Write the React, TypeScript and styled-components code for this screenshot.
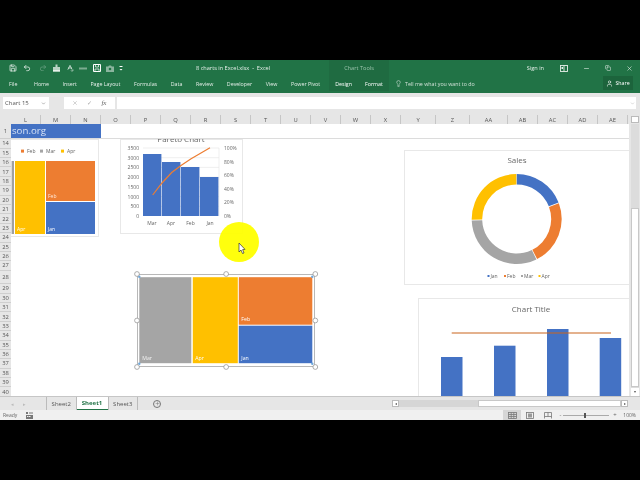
import React from "react";
import styled, { createGlobalStyle } from "styled-components";
import { Save, Undo2, Redo2, SpellCheck, Lightbulb, User, Minus, X, Copy, ChevronDown, Plus } from "lucide-react";

const Global = createGlobalStyle`
  html, body { margin: 0; padding: 0; background: #000; }
  body { font-family: "Open Sans", "Liberation Sans", sans-serif; }
`;

const BLUE = "#4472C4", ORANGE = "#ED7D31", GRAY = "#A5A5A5", YELLOW = "#FFC000";

const Page = styled.div`
  width: 640px; height: 480px; background: #000; overflow: hidden;
  display: flex; flex-direction: column; filter: blur(0.35px);
`;
const Band = styled.div<{ $h: number }>`height: ${p => p.$h}px; flex: none; background: #000;`;

const TitleRow = styled.div`
  height: 16px; flex: none; background: #217346; color: #fff; display: flex; align-items: stretch; font-size: 5.6px;
`;
const Qat = styled.div`
  width: 196px; flex: none; display: flex; align-items: center; padding-left: 9px; box-sizing: border-box;
`;
const QatIcon = styled.span<{ $faded?: boolean; $w: number }>`
  display: flex; width: ${p => p.$w}px; flex: none; justify-content: flex-start; opacity: ${p => p.$faded ? 0.35 : 1};
`;
const DocTitle = styled.div`width: 133px; flex: none; display: flex; align-items: center; white-space: pre; color: #e6efe9;`;
const ContextCell = styled.div`
  width: 60px; flex: none; background: #1F6B41; color: #9cc4ad; display: flex; align-items: center; justify-content: center;
`;
const WindowControls = styled.div`
  flex: 1; display: flex; align-items: center; justify-content: flex-end; padding-right: 7px; gap: 15px; color: #e6efe9;
`;
const SignIn = styled.span`margin-right: 1px;`;

const TabsRow = styled.div`
  height: 17px; flex: none; background: #217346; color: #e4eee8; display: flex; align-items: flex-start; font-size: 5.3px;
`;
const TabsLeft = styled.div`
  width: 329px; height: 15px; flex: none; display: flex; align-items: center; gap: 13.6px; padding-left: 9px; box-sizing: border-box; white-space: nowrap;
  & > span:nth-child(2) { margin-left: 3px; }
`;
const ContextTabs = styled.div`
  width: 60px; flex: none; height: 15px; background: #1F6B41; color: #fff; display: flex; align-items: center; justify-content: center; gap: 13px;
`;
const TellMe = styled.div`
  flex: 1; height: 15px; display: flex; align-items: center; gap: 3px; padding-left: 6px; color: #cfe0d6; white-space: nowrap;
`;
const ShareButton = styled.div`
  width: 30px; height: 14px; margin: 0 7px 0 0; background: #1c643c; color: #fff; display: flex; align-items: center; justify-content: center; gap: 2px; flex: none;
`;

const FormulaBar = styled.div`
  height: 22px; flex: none; background: #e6e6e6; display: flex; align-items: center; font-size: 6px; color: #555; box-sizing: border-box; padding: 0 3px 2px;
`;
const NameBox = styled.div`
  width: 46px; height: 12px; background: #fff; display: flex; align-items: center; justify-content: space-between; padding: 0 3px 0 2px; box-sizing: border-box;
`;
const FxBox = styled.div`
  width: 51px; height: 12px; margin-left: 15px; background: #fff; display: flex; align-items: center; justify-content: space-around; color: #a8a8a8; padding: 0 4px; box-sizing: border-box;
`;
const Fx = styled.i`color: #666; font-family: "Liberation Serif", serif; font-size: 7px;`;
const FormulaInput = styled.div`
  flex: 1; height: 12px; margin: 0 1px 0 2px; background: #fff; display: flex; align-items: center; justify-content: flex-end; padding-right: 1px; color: #aaa;
`;

const HeaderRow = styled.div`
  height: 9px; flex: none; background: #e6e6e6; display: flex; font-size: 5.8px; color: #555;
`;
const Corner = styled.div`width: 11px; flex: none;`;
const ColHead = styled.div<{ $w: number }>`
  width: ${p => p.$w}px; flex: none; box-sizing: border-box; border-right: 1px solid #c6c6c6; display: flex; align-items: center; justify-content: center;
`;

const SheetArea = styled.div`height: 272px; flex: none; display: flex; background: #fff;`;
const RowHeads = styled.div`
  width: 11px; flex: none; background: #e6e6e6; display: flex; flex-direction: column; font-size: 5.8px; color: #555; overflow: hidden;
`;
const RowHead = styled.div<{ $h: number }>`
  height: ${p => p.$h}px; flex: none; box-sizing: border-box; border-bottom: 1px solid #cfcfcf; display: flex; align-items: center; justify-content: center;
`;
const Canvas = styled.div`width: 618px; flex: none; position: relative; overflow: hidden; background: #fff;`;
const Banner = styled.div`
  position: absolute; left: 0; top: 0; width: 90px; height: 14px; background: ${BLUE}; color: #d7e2f5; font-size: 9.7px; line-height: 14px; padding-left: 1px; box-sizing: border-box; white-space: nowrap; z-index: 3;
`;
const BannerRule = styled.div`
  position: absolute; left: 0; top: 14px; width: 618px; height: 1px; background: #dcdcdc; z-index: 3;
`;
const BannerCover = styled.div`
  position: absolute; left: 0; top: 0; width: 618px; height: 14px; background: #fff; z-index: 2;
`;

const ChartFrame = styled.div<{ $x: number; $y: number; $w: number; $h: number; $line?: string }>`
  position: absolute; left: ${p => p.$x}px; top: ${p => p.$y}px; width: ${p => p.$w}px; height: ${p => p.$h}px;
  box-sizing: border-box; background: #fff; border: 1px solid ${p => p.$line || "#e8e8e8"};
`;
const DrawSvg = styled.svg`position: absolute; left: 0; top: 0; overflow: visible;`;

const Scroll = styled.div`
  width: 11px; flex: none; background: #e6e6e6; position: relative; display: flex; flex-direction: column; align-items: center;
`;
const Track = styled.div`flex: 1; width: 8px; background: #dcdcdc; display: flex; flex-direction: column;`;
const ThumbV = styled.div`margin-top: 84px; height: 179px; background: #fff; border: 1px solid #c8c8c8; box-sizing: border-box;`;
const UpCap = styled.div`
  position: absolute; top: -8px; left: 2px; width: 8px; height: 7px; background: #fff; border: 1px solid #bbb; box-sizing: border-box;
`;
const DownArrow = styled.div`height: 8px; width: 8px; background: #fff; font-size: 4px; line-height: 8px; text-align: center; color: #555; flex: none;`;

const TabBar = styled.div`
  height: 14px; flex: none; background: #e6e6e6; border-top: 1px solid #c6c6c6; box-sizing: border-box; display: flex; align-items: center; font-size: 6px; color: #555;
`;
const TabNav = styled.div`width: 46px; flex: none; display: flex; gap: 9px; padding-left: 11px; box-sizing: border-box; color: #bbb; font-size: 5px;`;
const SheetTab = styled.div<{ $active?: boolean }>`
  height: 13px; width: ${p => p.$active ? 31 : 30.5}px; flex: none; box-sizing: border-box; display: flex; align-items: center; justify-content: center;
  background: ${p => p.$active ? "#fff" : "transparent"};
  color: ${p => p.$active ? "#217346" : "#555"}; font-weight: ${p => p.$active ? 700 : 400};
  border-left: ${p => p.$active ? "none" : "1px solid #bbb"};
  border-right: ${p => p.$active ? "none" : "1px solid #bbb"};
  border-bottom: ${p => p.$active ? "1px solid #217346" : "none"};
`;
const AddSheet = styled.div`
  margin-left: 15px; width: 8px; height: 8px; border-radius: 50%; border: 1px solid #777; box-sizing: border-box; color: #666; display: flex; align-items: center; justify-content: center; flex: none;
`;
const HScroll = styled.div`margin-left: auto; margin-right: 12px; width: 236px; height: 7px; display: flex; align-items: stretch; flex: none;`;
const HBtn = styled.div`width: 7px; background: #fff; border: 1px solid #bbb; box-sizing: border-box; font-size: 4px; line-height: 5px; text-align: center; color: #555; flex: none;`;
const HTrack = styled.div`width: 79px; background: #d6d6d6; flex: none;`;
const HThumb = styled.div`flex: 1; background: #fff; border: 1px solid #c8c8c8; box-sizing: border-box;`;

const StatusBar = styled.div`
  height: 10px; flex: none; background: #f0f0f0; display: flex; align-items: center; font-size: 5px; color: #666;
`;
const Ready = styled.span`margin-left: 3px; width: 23px;`;
const ViewBtn = styled.div<{ $active?: boolean }>`
  width: 18px; height: 10px; flex: none; display: flex; align-items: center; justify-content: center; background: ${p => p.$active ? "#d6d6d6" : "transparent"};
`;
const Views = styled.div`margin-left: auto; display: flex; align-items: center; flex: none;`;
const ZoomSlider = styled.div`
  width: 46px; height: 1px; margin: 0 2px; background: #aaa; position: relative; flex: none;
`;
const ZoomThumb = styled.div`
  position: absolute; left: 21px; top: -2px; width: 2px; height: 5px; background: #555;
`;
const ZoomPct = styled.span`margin: 0 4px 0 6.5px;`;
const ZoomSign = styled.span`margin-left: 2px; font-size: 6px;`;

const COLS: [string, number][] = [["L",30],["M",30],["N",30],["O",30],["P",30],["Q",30],["R",30],["S",30],["T",30],["U",30],["V",30],["W",30],["X",30],["Y",35],["Z",34],["AA",38],["AB",30],["AC",30],["AD",30],["AE",30]];
const ROWS: [string, number][] = [["1",15],["14",9.6],["15",9.4],["16",9.4],["17",9.4],["18",9.4],["19",9.4],["20",9.4],["21",9.4],["22",9.4],["23",9.4],["24",9.4],["25",9.4],["26",9.4],["27",9.4],["28",13.5],["29",9.4],["30",9.4],["31",9.4],["32",9.4],["33",9.4],["34",9.4],["35",9.4],["36",9.4],["37",9.4],["38",9.4],["39",9.4],["40",9.4]];

// canvas origin in page coordinates
const OX = 11, OY = 124;

function polar(cx: number, cy: number, r: number, deg: number) {
  const a = ((deg - 90) * Math.PI) / 180;
  return [cx + r * Math.cos(a), cy + r * Math.sin(a)];
}
function arc(cx: number, cy: number, R: number, r: number, a: number, b: number) {
  const [x1, y1] = polar(cx, cy, R, a), [x2, y2] = polar(cx, cy, R, b), [x3, y3] = polar(cx, cy, r, b), [x4, y4] = polar(cx, cy, r, a);
  const l = b - a > 180 ? 1 : 0;
  return `M${x1} ${y1}A${R} ${R} 0 ${l} 1 ${x2} ${y2}L${x3} ${y3}A${r} ${r} 0 ${l} 0 ${x4} ${y4}Z`;
}

const T: React.FC<{ x: number; y: number; s?: number; c?: string; a?: "start" | "middle" | "end"; children: React.ReactNode }> = ({ x, y, s = 5, c = "#666", a = "start", children }) => (
  <text x={x} y={y} fontSize={s} fill={c} textAnchor={a} fontFamily='"Open Sans", sans-serif'>{children}</text>
);

const GridIcon = () => (
  <svg width={9} height={7} viewBox="0 0 9 7" fill="none" stroke="#777" strokeWidth={0.8}>
    <rect x={0.5} y={0.5} width={8} height={6} />
    <path d="M3.2 0.5V6.5M5.8 0.5V6.5M0.5 2.5H8.5M0.5 4.5H8.5" />
  </svg>
);
const LayoutIcon = () => (
  <svg width={8} height={7} viewBox="0 0 8 7" fill="#999" stroke="#777" strokeWidth={0.8}>
    <rect x={0.5} y={0.5} width={7} height={6} fill="none" />
    <rect x={2} y={1.5} width={4} height={4} stroke="none" />
  </svg>
);
const BreakIcon = () => (
  <svg width={8} height={7} viewBox="0 0 8 7" fill="none" stroke="#777" strokeWidth={0.8}>
    <path d="M0.5 6.5V0.5H7.5V6.5M0.5 4.5H7.5M4 0.5V4.5" />
  </svg>
);
const MacroIcon = () => (
  <svg width={7} height={7} viewBox="0 0 7 7" fill="#777">
    <rect x={0} y={0} width={2} height={2} />
    <rect x={3} y={0.5} width={4} height={1} />
    <rect x={0} y={3} width={7} height={4} />
    <path d="M1 4H2.5V5H1ZM3 4H4.5V5H3Z" fill="#f0f0f0" />
  </svg>
);
const TouchIcon = () => (
  <svg width={9} height={9} viewBox="0 0 9 9" fill="#e9f1ec">
    <path d="M3.5 0.5H5.5V3H8V7.5H1V3H3.5Z" opacity={0.75} />
    <rect x={1} y={6} width={7} height={1.5} />
  </svg>
);
const SaveAsIcon = () => (
  <svg width={8} height={8} viewBox="0 0 8 8" fill="none" stroke="#fff" strokeWidth={1}>
    <path d="M0.5 0.5H7.5V7.5H0.5Z" />
    <path d="M2.5 0.5V3H5.5V0.5M2 7.5V5H6V7.5" strokeWidth={0.7} />
  </svg>
);
const CameraIcon = () => (
  <svg width={8} height={7} viewBox="0 0 8 7" fill="#b9d2c4" opacity={0.7}>
    <path d="M0 1.5H2.2L3 0.4H5L5.8 1.5H8V7H0Z" />
    <circle cx={4} cy={4} r={1.3} fill="#217346" />
  </svg>
);
const DashIcon = () => (
  <svg width={8} height={5} viewBox="0 0 8 5" fill="#b9d2c4" opacity={0.6}><rect x={0} y={1.5} width={8} height={2} /></svg>
);
const MoreIcon = () => (
  <svg width={5} height={7} viewBox="0 0 5 7" fill="#fff"><rect x={0.5} y={1} width={3} height={1} /><path d="M0.5 4H3.5L2 5.6Z" /></svg>
);
const RibbonIcon = () => (
  <svg width={8} height={7} viewBox="0 0 8 7" fill="none" stroke="#e6efe9" strokeWidth={0.9}>
    <rect x={0.5} y={0.5} width={7} height={6} />
    <path d="M4 0.5V6.5" />
    <rect x={1.5} y={2} width={1.5} height={2} fill="#e6efe9" stroke="none" />
  </svg>
);

function Treemap1() {
  // the frame runs under the row headers on the left; coordinates below are page coordinates
  const px = (x: number) => x - 1, py = (y: number) => y - 139;
  return (
    <ChartFrame $x={-10} $y={15} $w={98} $h={98}>
      <DrawSvg width={98} height={98} style={{ left: -1, top: -1 }}>
        <rect x={px(11.6)} y={py(161)} width={2.4} height={73} fill="#a0a0a0" />
        <rect x={px(21)} y={py(149.6)} width={3} height={3} fill={ORANGE} />
        <T x={px(27)} y={py(153)}>Feb</T>
        <rect x={px(40)} y={py(149.6)} width={3} height={3} fill={GRAY} />
        <T x={px(46)} y={py(153)}>Mar</T>
        <rect x={px(61)} y={py(149.6)} width={3} height={3} fill={YELLOW} />
        <T x={px(67)} y={py(153)}>Apr</T>
        <rect x={px(15)} y={py(161)} width={30} height={73} fill={YELLOW} />
        <rect x={px(46)} y={py(161)} width={49} height={40} fill={ORANGE} />
        <rect x={px(46)} y={py(202)} width={49} height={32} fill={BLUE} />
        <T x={px(48)} y={py(197.5)} c="#ffe6d6">Feb</T>
        <T x={px(17)} y={py(231)} c="#fff">Apr</T>
        <T x={px(48)} y={py(231)} c="#fff">Jan</T>
      </DrawSvg>
    </ChartFrame>
  );
}

function Pareto() {
  const x0 = 120 - OX, y0 = 139 - OY;
  const px = (x: number) => x - 120, py = (y: number) => y - 139;
  const ylab = ["3500","3000","2500","2000","1500","1000","500","0"];
  const rlab = ["100%","80%","60%","40%","20%","0%"];
  return (
    <ChartFrame $x={x0} $y={y0} $w={123} $h={95}>
      <DrawSvg width={123} height={95} style={{ left: -1, top: -1 }}>
        <T x={px(181)} y={py(141.5)} s={8} a="middle">Pareto Chart</T>
        {[148, 157.7, 167.4, 177.1, 186.9, 196.6, 206.3].map(y => (
          <line key={y} x1={px(143)} x2={px(219)} y1={py(y)} y2={py(y)} stroke="#e4e4e4" strokeWidth={0.6} />
        ))}
        <line x1={px(219)} x2={px(219)} y1={py(148)} y2={py(216)} stroke="#e4e4e4" strokeWidth={0.6} />
        {[[143, 154], [162, 162], [181, 167], [200, 177]].map(([x, y]) => (
          <rect key={x} x={px(x)} y={py(y)} width={18.4} height={216 - y} fill={BLUE} />
        ))}
        <polyline points={[[152.7, 195], [162, 183], [171.7, 172.5], [181, 165.5], [190.7, 159], [210, 147.7]].map(([x, y]) => `${px(x)},${py(y)}`).join(" ")} fill="none" stroke={ORANGE} strokeWidth={1.2} />
        {ylab.map((l, i) => <T key={l} x={px(139)} y={py(150 + i * 9.72)} a="end">{l}</T>)}
        {rlab.map((l, i) => <T key={l} x={px(224)} y={py(150 + i * 13.6)}>{l}</T>)}
        {[["Mar", 152], ["Apr", 171], ["Feb", 190.5], ["Jan", 210]].map(([l, x]) => (
          <T key={l as string} x={px(x as number)} y={py(225)} a="middle">{l}</T>
        ))}
      </DrawSvg>
    </ChartFrame>
  );
}

function BigTreemap() {
  const x0 = 136.7 - OX, y0 = 274.3 - OY;
  const W = 178.3, H = 93;
  const hs = [[0, 0], [W / 2, 0], [W, 0], [0, H / 2], [W, H / 2], [0, H], [W / 2, H], [W, H]];
  const px = (x: number) => x - 136.7, py = (y: number) => y - 274.3;
  return (
    <ChartFrame $x={x0} $y={y0} $w={W} $h={H} $line="#b8b8b8">
      <DrawSvg width={W} height={H} style={{ left: -1, top: -1 }}>
        <rect x={px(139)} y={py(277.5)} width={52} height={86} fill={GRAY} />
        <rect x={px(192.5)} y={py(277.5)} width={45} height={86} fill={YELLOW} />
        <rect x={px(238.5)} y={py(277.5)} width={73.5} height={47.5} fill={ORANGE} />
        <rect x={px(238.5)} y={py(326)} width={73.5} height={37.5} fill={BLUE} />
        <T x={px(142)} y={py(360)} s={5.2} c="#f3f3f3">Mar</T>
        <T x={px(195)} y={py(360)} s={5.2} c="#fff">Apr</T>
        <T x={px(241)} y={py(321.5)} s={5.2} c="#fff">Feb</T>
        <T x={px(241)} y={py(360)} s={5.2} c="#fff">Jan</T>
        {[[139, 277], [312, 277], [139, 364], [312, 364]].map(([x, y]) => (
          <circle key={`${x}-${y}`} cx={px(x)} cy={py(y)} r={1.2} fill="#6fa8dc" />
        ))}
        {hs.map(([x, y]) => (
          <circle key={`${x}-${y}`} cx={x} cy={y} r={2.4} fill="#fff" stroke="#8c8c8c" strokeWidth={0.7} />
        ))}
      </DrawSvg>
    </ChartFrame>
  );
}

function Donut() {
  const cx = 516.7 - 404, cy = 219 - 150;
  const segs: [number, number, string][] = [[0, 68.5, BLUE], [69.5, 153, ORANGE], [154, 268, GRAY], [269, 359.5, YELLOW]];
  const leg: [string, string, number][] = [["Jan", BLUE, 487.5], ["Feb", ORANGE, 504], ["Mar", GRAY, 521], ["Apr", YELLOW, 538.5]];
  return (
    <ChartFrame $x={404 - OX} $y={150 - OY} $w={226} $h={135}>
      <DrawSvg width={226} height={135} style={{ left: -1, top: -1 }}>
        <T x={113} y={13} s={8} a="middle" c="#6a6a6a">Sales</T>
        {segs.map(([a, b, c]) => <path key={a} d={arc(cx, cy, 45, 34.5, a, b)} fill={c} />)}
        {leg.map(([l, c, x]) => (
          <React.Fragment key={l}>
            <rect x={x - 404} y={125} width={2} height={2} fill={c} />
            <T x={x - 404 + 3} y={128}>{l}</T>
          </React.Fragment>
        ))}
      </DrawSvg>
    </ChartFrame>
  );
}

function BarChart() {
  const bars: [number, number][] = [[441, 357], [494, 345.7], [547, 329], [599.7, 338]];
  return (
    <ChartFrame $x={418 - OX} $y={298 - OY} $w={212} $h={110}>
      <DrawSvg width={212} height={110} style={{ left: -1, top: -1 }}>
        <T x={113} y={14} s={8} a="middle" c="#666">Chart Title</T>
        {bars.map(([x, y]) => <rect key={x} x={x - 418} y={y - 298} width={21.5} height={110} fill={BLUE} />)}
        <line x1={33.7} x2={193} y1={35} y2={35} stroke="#C9641C" strokeWidth={1.1} />
      </DrawSvg>
    </ChartFrame>
  );
}

function Highlight() {
  const size = 50;
  return (
    <DrawSvg width={size} height={size} style={{ left: 239 - OX - 25, top: 242 - OY - 25, zIndex: 5 }}>
      <circle cx={25} cy={25} r={20} fill="#FFFF00" opacity={0.95} />
      <path d="M25 26 L25 35 L27 33 L28.5 36.5 L30 36 L28.6 32.6 L31 32.4 Z" fill="#fff" stroke="#333" strokeWidth={0.7} />
    </DrawSvg>
  );
}

export default function App() {
  return (
    <Page>
      <Global />
      <Band $h={60} />
      <TitleRow>
        <Qat>
          <QatIcon $w={14}><Save size={8} /></QatIcon>
          <QatIcon $w={16}><Undo2 size={8} /></QatIcon>
          <QatIcon $w={13} $faded><Redo2 size={8} /></QatIcon>
          <QatIcon $w={14}><TouchIcon /></QatIcon>
          <QatIcon $w={13}><SpellCheck size={8} /></QatIcon>
          <QatIcon $w={14}><DashIcon /></QatIcon>
          <QatIcon $w={13}><SaveAsIcon /></QatIcon>
          <QatIcon $w={13}><CameraIcon /></QatIcon>
          <QatIcon $w={5}><MoreIcon /></QatIcon>
        </Qat>
        <DocTitle>8 charts in Excel.xlsx  -  Excel</DocTitle>
        <ContextCell>Chart Tools</ContextCell>
        <WindowControls>
          <SignIn>Sign in</SignIn>
          <RibbonIcon />
          <Minus size={7} />
          <Copy size={6} />
          <X size={7} />
        </WindowControls>
      </TitleRow>
      <TabsRow>
        <TabsLeft>
          {["File","Home","Insert","Page Layout","Formulas","Data","Review","Developer","View","Power Pivot"].map(t => <span key={t}>{t}</span>)}
        </TabsLeft>
        <ContextTabs><span>Design</span><span>Format</span></ContextTabs>
        <TellMe><Lightbulb size={7} />Tell me what you want to do</TellMe>
        <ShareButton><User size={7} />Share</ShareButton>
      </TabsRow>
      <FormulaBar>
        <NameBox>Chart 15<ChevronDown size={5} /></NameBox>
        <FxBox><X size={6} /><span>✓</span><Fx>fx</Fx></FxBox>
        <FormulaInput><ChevronDown size={5} /></FormulaInput>
      </FormulaBar>
      <HeaderRow>
        <Corner />
        {COLS.map(([n, w]) => <ColHead key={n} $w={w}>{n}</ColHead>)}
      </HeaderRow>
      <SheetArea>
        <RowHeads>
          {ROWS.map(([n, h]) => <RowHead key={n} $h={h}>{n}</RowHead>)}
        </RowHeads>
        <Canvas>
          <Treemap1 />
          <Pareto />
          <BigTreemap />
          <Donut />
          <BarChart />
          <BannerCover />
          <Banner>son.org</Banner>
          <BannerRule />
          <Highlight />
        </Canvas>
        <Scroll>
          <UpCap />
          <Track>
            <ThumbV />
          </Track>
          <DownArrow>▾</DownArrow>
        </Scroll>
      </SheetArea>
      <TabBar>
        <TabNav><span>◂</span><span>▸</span></TabNav>
        <SheetTab>Sheet2</SheetTab>
        <SheetTab $active>Sheet1</SheetTab>
        <SheetTab>Sheet3</SheetTab>
        <AddSheet><Plus size={5} /></AddSheet>
        <HScroll>
          <HBtn>◂</HBtn>
          <HTrack />
          <HThumb />
          <HBtn>▸</HBtn>
        </HScroll>
      </TabBar>
      <StatusBar>
        <Ready>Ready</Ready>
        <MacroIcon />
        <Views>
          <ViewBtn $active><GridIcon /></ViewBtn>
          <ViewBtn><LayoutIcon /></ViewBtn>
          <ViewBtn><BreakIcon /></ViewBtn>
          <ZoomSign>-</ZoomSign>
          <ZoomSlider><ZoomThumb /></ZoomSlider>
          <ZoomSign>+</ZoomSign>
          <ZoomPct>100%</ZoomPct>
        </Views>
      </StatusBar>
      <Band $h={61} />
    </Page>
  );
}
